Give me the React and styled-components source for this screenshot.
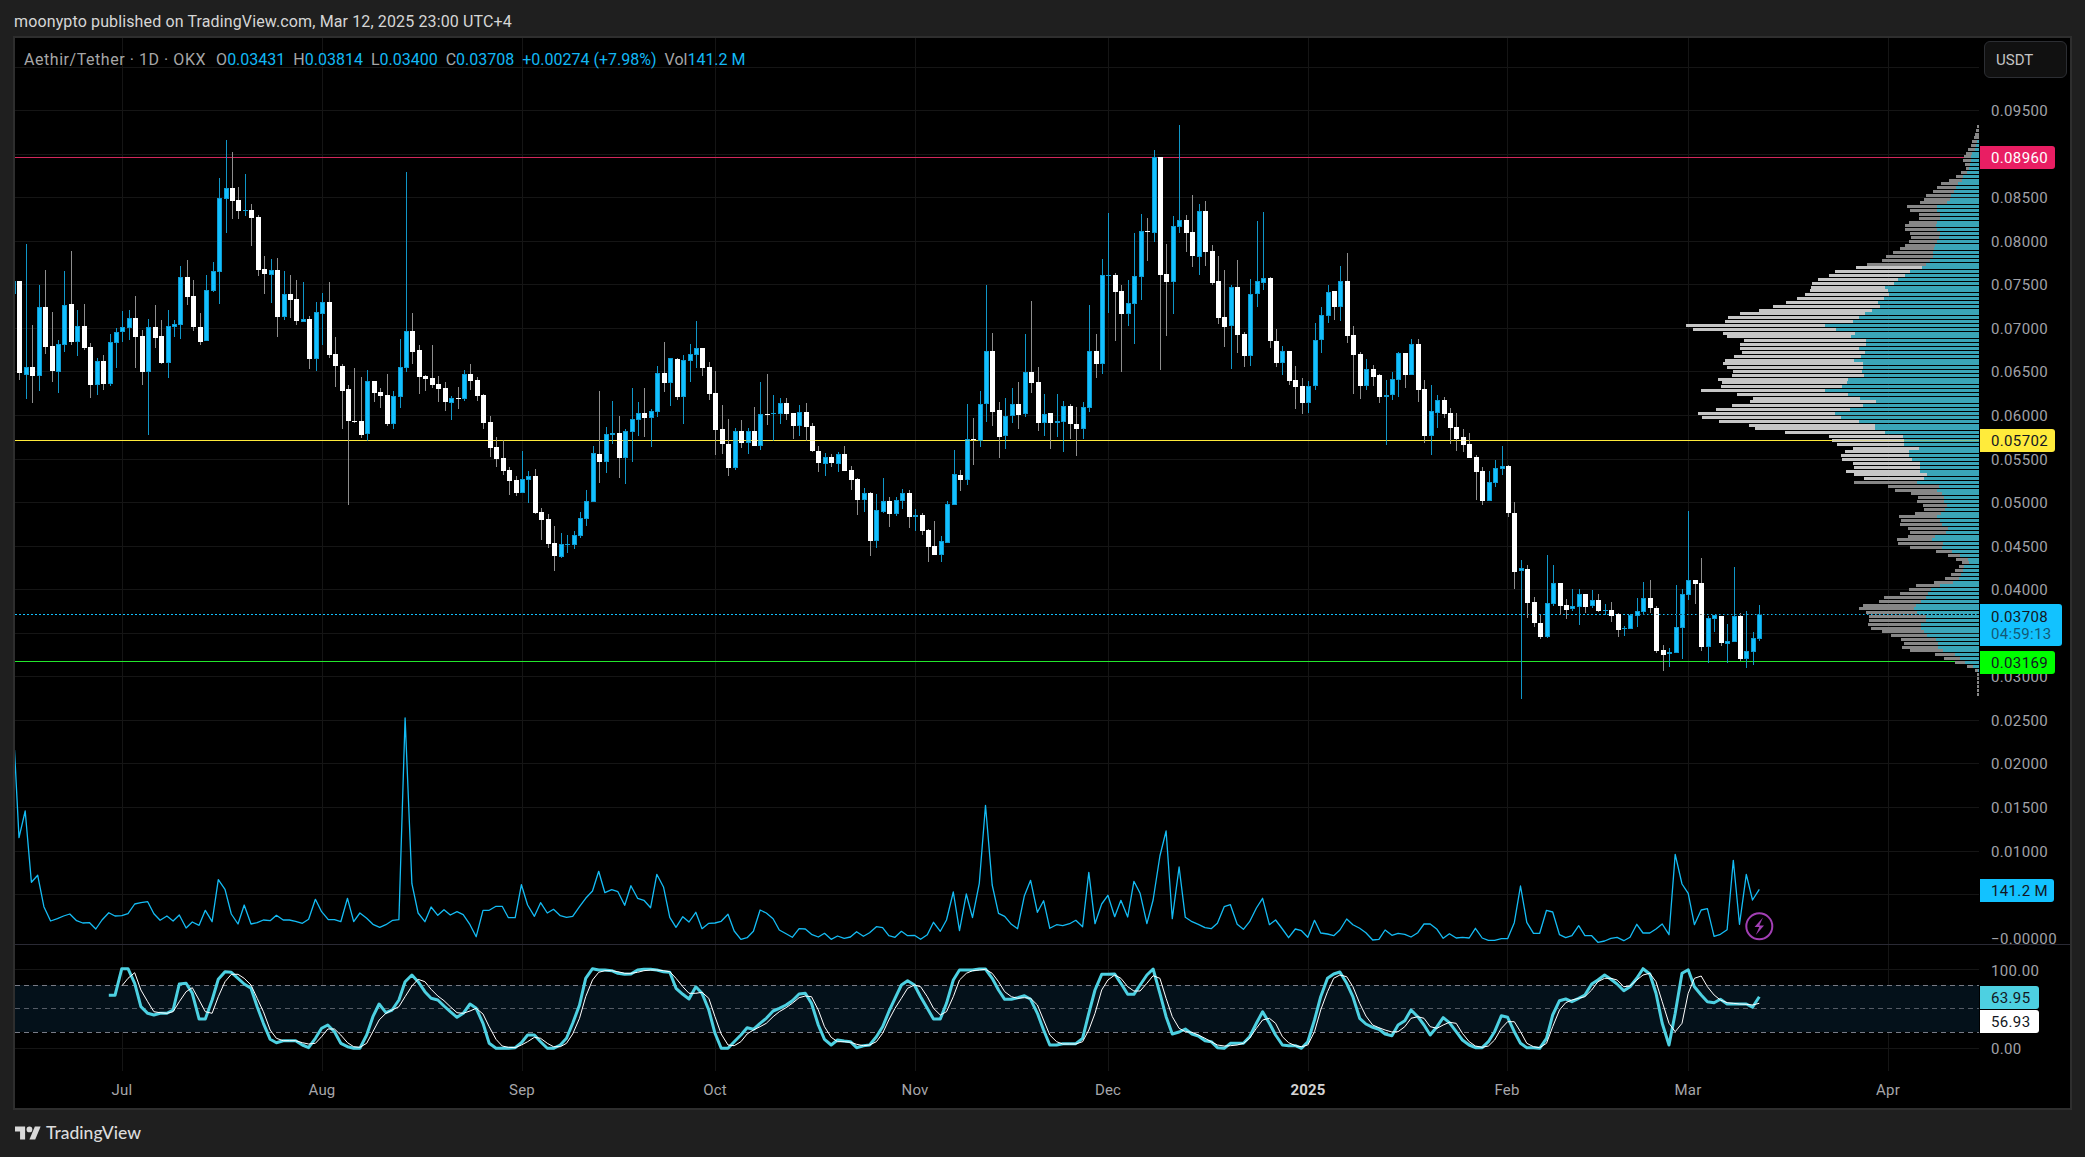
import React from 'react'
import styled, { createGlobalStyle } from 'styled-components'

// candles read off the chart: [bodyTop, bodyBottom, high, low, isBlue], y in crop pixels (3x)
const seg1 = [[470,470,453,492,1],[453,728,453,750],[711,735,342,806,1],[711,738,585,818],[531,738,465,783,1],[531,651,420,672],[648,723,546,756],[642,726,630,789,1],[525,645,423,666,1],[522,636,363,645],[588,636,540,678,1],[588,654,522,660],[651,765,639,804],[693,765,684,795,1],[693,762,675,780],[636,762,612,768,1],[606,639,594,714,1],[591,606,543,636,1],[564,594,540,630,1],[564,621,498,714],[618,726,600,765],[591,726,567,915,1],[591,624,525,654],[618,699,570,702],[588,699,540,744,1],[582,591,570,621,1],[441,585,408,627,1],[441,501,390,525],[498,591,450,603],[591,636,549,645],[480,633,435,633,1],[423,483,396,486,1],[204,426,144,522,1],[174,207,30,309,1],[174,213,66,267],[210,243,171,267],[240,243,132,258,1],[240,264,222,348],[261,420,255,438],[417,432,378,492],[420,435,387,519,1],[420,561,384,621],[492,561,423,570,1],[492,510,435,564],[507,573,450,585],[567,576,456,576,1],[567,687,558,717],[546,687,516,723,1],[516,552,489,645,1],[516,675,456,684],[672,708,621,771],[708,783,702,897],[777,873,765,1125],[873,876,714,879],[873,915,741,924],[753,912,720,933,1],[753,789,753,816],[786,798,774,834],[795,882,732,888],[798,882,783,897,1],[711,801,627,834,1],[603,714,126,726,1],[603,666,549,702],[660,741,645,792],[738,747,735,783],[744,765,645,774],[762,777,738,816],[774,816,756,843],[804,819,798,870,1],[804,807,771,837],[732,807,720,813,1],[732,753,702,780],[750,798,741,813],[795,879,792,897],[876,954,858,981],[951,987,921,1011],[984,1023,930,1035],[1020,1053,1011,1095],[1050,1089,1038,1098],[1047,1089,963,1089,1],[1038,1050,1023,1119,1]]
const seg2 = [[828,939,807,942],[936,960,924,1020],[957,1032,942,1044],[1029,1068,978,1113],[1032,1071,999,1074,1],[1032,1035,1005,1059,1],[1005,1035,993,1047,1],[954,1008,936,1014,1],[903,957,870,978,1],[759,906,738,906,1],[762,786,573,849],[702,786,681,819,1],[699,705,603,732,1],[699,774,648,834],[693,774,687,852,1],[657,696,564,786,1],[639,660,606,708,1],[639,654,564,711],[633,654,627,741,1],[519,636,498,651,1],[519,549,426,576],[474,549,474,618,1],[477,591,474,600],[480,591,465,672,1],[462,483,432,546,1],[444,465,363,504,1],[444,504,444,528],[501,582,486,600],[579,690,513,765],[687,732,615,762],[732,804,657,828],[693,804,684,810,1],[693,729,660,744],[693,729,684,762,1],[693,738,621,738],[642,738,546,750,1],[642,645,522,675],[639,642,585,723,1],[609,642,594,672,1],[609,642,594,660],[639,678,639,717],[636,678,615,708,1],[636,681,609,723],[678,753,669,756],[753,789,738,816],[771,792,759,828,1],[771,789,762,801],[762,792,756,816,1],[762,813,738,813],[810,840,798,870],[837,900,834,945],[879,900,864,936,1],[879,1023,876,1068],[930,1023,882,1044,1],[903,936,834,939,1],[903,942,891,981],[900,942,891,948,1],[879,903,867,927,1],[879,951,870,984],[945,951,927,993,1],[945,993,939,1005],[990,1041,987,1086],[1038,1065,963,1065],[1023,1065,1008,1086,1],[912,1029,903,1029,1],[822,915,750,915,1],[825,840,810,873],[717,840,612,855,1],[717,720,654,795],[612,723,573,741,1],[453,612,255,666,1],[453,636,399,678],[630,711,606,774],[648,708,594,747,1],[612,648,564,669,1],[612,645,546,687],[516,642,402,651,1],[516,549,303,579],[546,669,501,693]]
const seg3 = [[882,909,822,948,1],[879,909,879,987],[903,909,822,951,1],[858,906,843,996,1],[858,912,852,957],[912,927,861,1008],[861,927,846,957,1],[693,864,555,876,1],[693,732,642,774],[465,732,417,762,1],[465,468,279,579,1],[465,516,459,663],[513,582,495,756],[549,582,480,618,1],[468,552,339,672,1],[333,471,282,540,1],[333,336,294,423],[111,339,90,366,1],[111,465,111,750],[462,486,372,648],[318,486,288,582,1],[300,321,15,339,1],[300,339,285,396],[336,408,225,441],[273,411,252,465,1],[273,396,243,438],[393,489,375,495],[483,594,408,612],[591,621,450,681],[501,618,495,747,1],[501,645,420,699],[642,708,636,741],[522,708,477,738,1],[483,522,303,561,1],[474,489,276,510,1],[474,663,471,684],[663,729,627,741],[693,729,678,765,1],[693,783,693,795],[780,801,738,867],[798,849,774,882],[798,849,783,879,1],[660,798,609,810,1],[585,660,561,699,1],[516,588,495,609,1],[513,561,513,600],[483,561,438,603,1],[483,648,399,669],[645,705,618,822],[702,798,696,837],[747,798,717,810,1],[747,771,735,798],[765,831,762,849],[825,831,780,975,1],[777,825,756,840,1],[699,780,696,831,1],[699,765,699,804],[672,765,657,765,1],[672,810,657,846],[807,948,780,969],[873,948,795,1005,1],[840,879,825,924,1],[840,882,831,894],[879,924,864,972],[921,957,879,993],[951,975,927,996],[972,1014,939,1014],[1011,1056,1005,1140],[1053,1143,1041,1155],[1086,1143,1053,1143,1],[1044,1089,1020,1101,1],[1038,1047,978,1065,1],[1038,1179,1035,1191]]
const seg4 = [[459,636,427,687],[624,633,600,1017,1],[627,729,615,774],[726,789,711,801],[789,831,765,837],[729,831,585,834,1],[669,732,615,738,1],[669,738,669,765],[735,750,717,777],[738,747,687,753,1],[702,741,687,795,1],[702,741,702,759],[720,738,690,744,1],[720,753,702,756],[750,753,732,765,1],[750,768,726,786],[762,810,759,831],[803,806,798,828,1],[765,807,762,807,1],[753,768,714,801,1],[714,756,666,765,1],[714,744,660,759],[744,873,738,879],[870,885,855,933],[876,882,864,921,1],[801,879,675,879,1],[702,804,687,897,1],[660,705,453,720,1],[660,672,660,732],[669,861,594,873],[774,861,768,909,1],[765,777,765,816,1],[768,849,768,858],[843,852,792,909,1],[768,846,621,846,1],[768,897,759,903],[873,897,753,924,1],[834,876,816,915,1],[762,837,735,843,1]]

const fromCrop = (y0, rows) => rows.map(([t, b, h, l, blue]) => ({
  top: Math.round(y0 + t / 3),
  bottom: Math.round(y0 + b / 3),
  high: Math.round(y0 + h / 3),
  low: Math.round(y0 + l / 3),
  blue: !!blue,
}))
const candles = [...fromCrop(130, seg1), ...fromCrop(200, seg2), ...fromCrop(120, seg3), ...fromCrop(360, seg4)]
const BAR_STEP = (1759.3 - 19.3) / (candles.length - 2)
const barX = i => Math.max(15, Math.round(19.3 + (i - 1) * BAR_STEP))

// volume profile rows: [y, grey left, teal left], crop pixels
const profileTop = [[380,831],[392,829],[403,826],[413,822,836],[424,815,830],[436,813,827],[448,804,824],[459,797,815],[470,792,812],[482,789,812],[494,795,810],[505,798,808],[517,783,801],[528,768,790],[540,747,786],[551,723,774],[563,711,767],[575,699,762],[587,678,753],[598,672,750],[608,660,741],[620,621,711],[632,630,711],[644,657,720],[656,657,720],[666,627,711],[677,615,708],[689,615,711],[700,630,720],[712,633,717],[724,627,711],[735,615,705],[746,600,702],[757,579,699],[769,558,699],[781,546,690],[792,501,678],[803,468,666],[815,405,630],[827,387,615],[838,354,594],[850,336,582],[861,333,555],[872,330,564],[884,315,567],[895,291,552],[907,258,534],[919,219,540],[930,177,516],[941,120,495],[953,84,477],[965,75,459],[977,-42,375],[989,-20,408],[1000,69,465],[1010,81,453],[1022,132,498],[1034,120,498],[1045,120,477],[1057,126,495],[1068,102,483],[1080,75,462],[1091,69,489],[1103,81,489],[1115,99,486],[1127,96,492],[1137,54,444],[1148,66,441],[1160,63,426],[1172,3,375],[1184,111,444],[1195,159,480]]
const profileBottom = [[5,150,528],[16,96,489],[28,48,450],[40,-5,405],[52,6,423],[64,57,477],[75,147,525],[85,165,525],[97,255,555],[109,387,609],[121,396,612],[133,411,612],[145,459,657],[155,435,627],[166,423,627],[178,426,636],[190,459,660],[202,462,660],[213,438,660],[224,462,681],[236,492,672],[247,462,651],[259,564,717],[270,585,711],[281,633,726],[292,654,732],[304,651,732],[316,669,741],[328,672,735],[339,645,723],[350,597,711],[361,603,720],[373,600,726],[385,624,744],[397,630,738],[408,624,705],[419,591,696],[431,594,729],[442,630,726],[454,708,756],[466,744,780],[477,768,804],[488,786,807],[499,777,792],[511,765,789],[523,753,784],[535,735,778],[546,702,760],[557,648,720],[568,627,693],[580,600,684],[592,552,678],[604,537,663],[615,489,648],[626,477,642],[637,498,651],[649,507,678],[661,507,678],[673,504,663],[684,513,663],[694,546,672],[706,573,681],[718,603,708],[730,612,714],[742,606,714],[752,630,729],[763,705,765],[775,732,780],[787,765,795],[799,801,820],[811,825,835],[823,832],[835,832],[847,832],[859,832],[871,832],[883,832]]
const profileX = x => 1700 + x / 3
const profile = [
  ...profileTop.map(([y, g, t]) => [y / 3, g, t]),
  ...profileBottom.map(([y, g, t]) => [400 + y / 3, g, t]),
].map(([y, g, t]) => ({
  y: Math.round(y - 1.5),
  left: Math.max(15, profileX(g)),
  split: t === undefined ? 1979 : profileX(t),
  light: y > 264 && y < 482,
}))

// indicator lines, crop pixels (x at 1.7717x, y at 3x)
const volA = [[8,60],[16,323],[27,243],[38,457],[49,436],[60,530],[72,573],[84,566],[95,558],[106,552],[118,572],[129,579],[141,578],[152,597],[163,570],[175,548],[186,558],[198,557],[209,551],[221,522],[232,518],[244,515],[255,551],[266,571],[278,558],[289,573],[300,555],[312,594],[323,576],[335,586],[346,541],[358,575],[369,449],[381,478],[392,552],[404,582],[415,525],[427,582],[438,578],[449,570],[461,572],[472,556],[484,570],[495,570],[506,574],[518,580],[529,568],[541,508],[552,545],[564,569],[575,569],[586,575],[598,505],[609,575],[620,549],[632,565],[643,583],[655,592],[666,584],[678,571],[689,569],[700,-36],[712,461],[723,549],[735,575],[746,531],[758,556],[769,539],[780,555],[792,545],[803,554],[815,584],[826,620],[838,541],[849,541],[861,529],[872,529],[883,563],[895,563],[906,464],[917,525],[929,559],[940,518],[952,549],[963,538],[975,557],[986,562],[997,559],[1009,530],[1020,505],[1032,483],[1043,424],[1054,488],[1066,479],[1077,485],[1089,526],[1100,467],[1112,505],[1123,511],[1135,533],[1146,433],[1158,472],[1169,562],[1180,592],[1192,560],[1203,576],[1215,547],[1226,596],[1238,580],[1249,579],[1260,574],[1272,553],[1283,603],[1295,628],[1306,623],[1317,604],[1329,540],[1340,549],[1352,566],[1363,600],[1375,611],[1386,622],[1398,596],[1409,597],[1420,613],[1432,621],[1443,610],[1455,628],[1466,618],[1478,625],[1489,621],[1500,605],[1512,619],[1523,608],[1535,590],[1546,593],[1557,617],[1568,622]]
const volB = [[29,604],[40,617],[52,616],[63,628],[75,614],[86,577],[98,604],[109,570],[121,486],[132,602],[144,492],[155,563],[167,460],[178,226],[190,465],[201,550],[212,559],[224,583],[235,596],[247,497],[258,451],[270,547],[281,512],[292,595],[304,584],[315,587],[327,581],[338,571],[350,590],[361,427],[372,581],[384,522],[395,496],[407,560],[418,511],[430,561],[441,454],[452,490],[464,581],[475,510],[487,378],[498,303],[509,566],[521,411],[532,562],[544,575],[555,583],[567,593],[578,596],[589,580],[601,530],[612,524],[624,583],[635,598],[646,575],[658,534],[669,505],[681,584],[692,570],[704,597],[715,623],[727,597],[738,602],[749,622],[761,571],[772,609],[784,612],[795,617],[806,600],[818,567],[829,584],[841,595],[852,608],[864,630],[875,628],[886,600],[898,616],[909,610],[921,613],[932,621],[944,608],[955,582],[966,582],[978,598],[989,625],[1000,611],[1012,624],[1023,622],[1035,624],[1046,595],[1058,624],[1069,631],[1080,631],[1092,626],[1103,626],[1115,578],[1126,468],[1137,577],[1149,610],[1160,610],[1172,541],[1183,546],[1195,614],[1206,623],[1217,617],[1229,587],[1240,617],[1252,617],[1263,637],[1275,633],[1286,625],[1297,622],[1309,632],[1320,622],[1332,583],[1343,609],[1355,609],[1366,597],[1377,582],[1389,614],[1400,373],[1412,462],[1423,490],[1434,584],[1446,540],[1457,536],[1469,619],[1480,613],[1492,599],[1503,391],[1514,583],[1526,433],[1537,510],[1549,478]]
const kA = [[175,796],[186,796],[198,716],[209,716],[221,760],[232,830],[244,850],[255,855],[266,850],[278,850],[289,840],[300,762],[312,760],[323,790],[335,867],[346,867],[358,810],[369,748],[381,725],[392,727],[404,745],[415,762],[427,775],[438,830],[449,880],[461,928],[472,938],[484,932],[495,932],[506,932],[518,945],[529,953],[541,925],[552,895],[563,885],[575,905],[586,940],[598,950],[609,955],[620,955],[632,915],[643,860],[654,822],[666,848],[677,840],[689,810],[700,755],[712,735],[723,755],[735,785],[746,805],[758,810],[769,828],[780,845],[792,862],[803,850],[815,822],[826,835],[838,880],[849,940],[861,955],[872,955],[883,955],[895,953],[906,938],[917,915],[929,915],[940,935],[952,955],[963,955],[975,945],[986,925],[997,880],[1009,825],[1020,745],[1032,716],[1043,720],[1054,720],[1066,722],[1077,730],[1089,733],[1100,732],[1112,720],[1123,718],[1135,718],[1146,720],[1158,725],[1169,727],[1180,775],[1192,793],[1203,807],[1215,770],[1226,790],[1238,840],[1249,910],[1260,955],[1272,955],[1283,935],[1295,915],[1306,893],[1317,898],[1329,880],[1340,865],[1352,843],[1363,835],[1375,825],[1386,812],[1398,792],[1409,790],[1420,820],[1432,885],[1443,928],[1455,945],[1466,930],[1478,933],[1489,935],[1500,953],[1512,947],[1523,945],[1535,920],[1546,890],[1557,845],[1568,805]]
const kB = [[29,765],[40,752],[52,765],[63,800],[75,835],[86,867],[98,867],[109,820],[121,750],[132,720],[144,720],[155,720],[167,717],[178,717],[190,745],[201,780],[212,808],[224,808],[235,803],[247,797],[258,808],[270,850],[281,900],[292,945],[304,945],[315,941],[327,941],[338,941],[350,925],[361,850],[372,780],[384,733],[395,733],[407,732],[418,760],[430,793],[441,793],[452,765],[464,735],[475,717],[487,790],[498,860],[509,912],[521,906],[532,897],[544,912],[555,918],[567,932],[578,935],[589,953],[601,955],[612,940],[624,940],[635,940],[646,920],[658,880],[669,845],[681,880],[692,915],[704,945],[715,947],[727,947],[738,955],[749,935],[761,870],[772,800],[784,745],[795,732],[806,726],[818,760],[829,800],[841,865],[852,882],[864,892],[875,898],[886,912],[898,917],[909,885],[921,872],[932,840],[944,860],[955,885],[966,915],[978,890],[989,863],[1000,878],[1012,905],[1023,930],[1035,945],[1046,953],[1058,953],[1069,935],[1080,905],[1092,857],[1103,862],[1115,905],[1126,940],[1137,953],[1149,953],[1160,955],[1172,925],[1183,855],[1195,812],[1206,807],[1217,815],[1229,805],[1240,795],[1252,762],[1263,750],[1275,735],[1286,748],[1297,762],[1309,782],[1320,770],[1332,745],[1343,716],[1355,732],[1366,790],[1377,880],[1389,945],[1400,850],[1412,730],[1423,719],[1434,770],[1446,795],[1457,815],[1469,818],[1480,808],[1492,822],[1503,822],[1514,822],[1526,822],[1537,832],[1549,800]]
const dA = [[198,768],[209,745],[221,728],[232,780],[244,815],[255,845],[266,848],[278,850],[289,845],[300,815],[312,785],[323,773],[335,810],[346,845],[358,850],[369,800],[381,755],[392,733],[404,733],[415,745],[427,765],[438,805],[449,845],[461,900],[472,925],[484,932],[495,932],[506,932],[518,938],[529,942],[541,940],[552,920],[563,897],[575,897],[586,915],[598,938],[609,950],[620,952],[632,940],[643,905],[654,870],[666,850],[677,840],[689,830],[700,800],[712,768],[723,748],[735,755],[746,778],[758,798],[769,812],[780,830],[792,848],[803,850],[815,843],[826,835],[838,852],[849,890],[861,928],[872,948],[883,952],[895,953],[906,945],[917,935],[929,922],[940,925],[952,940],[963,950],[975,950],[986,940],[997,912],[1009,865],[1020,800],[1032,750],[1043,727],[1054,722],[1066,722],[1077,725],[1089,730],[1100,730],[1112,727],[1123,722],[1135,720],[1146,720],[1158,722],[1169,725],[1180,745],[1192,770],[1203,790],[1215,790],[1226,787],[1238,805],[1249,860],[1260,912],[1272,945],[1283,947],[1295,935],[1306,912],[1317,900],[1329,890],[1340,880],[1352,860],[1363,845],[1375,833],[1386,820],[1398,803],[1409,798],[1420,800],[1432,840],[1443,890],[1455,922],[1466,935],[1478,935],[1489,937],[1500,943],[1512,947],[1523,945],[1535,935],[1546,910],[1557,870],[1568,835]]
const dB = [[29,805],[40,775],[52,765],[63,770],[75,800],[86,835],[98,855],[109,845],[121,800],[132,750],[144,730],[155,722],[167,720],[178,718],[190,730],[201,755],[212,785],[224,800],[235,805],[247,803],[258,805],[270,825],[281,870],[292,915],[304,935],[315,942],[327,942],[338,942],[350,935],[361,900],[372,850],[384,780],[395,750],[407,735],[418,745],[430,770],[441,783],[452,783],[464,760],[475,737],[487,745],[498,805],[509,860],[521,895],[532,905],[544,907],[555,915],[567,925],[578,935],[589,945],[601,948],[612,947],[624,945],[635,940],[646,925],[658,895],[669,870],[681,865],[692,880],[704,920],[715,938],[727,947],[738,950],[749,945],[761,905],[772,840],[784,785],[795,745],[806,735],[818,740],[829,770],[841,820],[852,858],[864,885],[875,893],[886,900],[898,906],[909,905],[921,890],[932,865],[944,860],[955,865],[966,890],[978,895],[989,885],[1000,877],[1012,880],[1023,910],[1035,935],[1046,948],[1058,952],[1069,948],[1080,930],[1092,895],[1103,875],[1115,875],[1126,905],[1137,940],[1149,950],[1160,953],[1172,940],[1183,890],[1195,840],[1206,818],[1217,810],[1229,805],[1240,800],[1252,780],[1263,755],[1275,745],[1286,745],[1297,750],[1309,770],[1320,768],[1332,750],[1343,735],[1355,730],[1366,755],[1377,815],[1389,880],[1400,905],[1412,880],[1423,790],[1434,745],[1446,738],[1457,770],[1469,795],[1480,810],[1492,818],[1503,820],[1514,822],[1526,823],[1537,825],[1549,820]]

const ZOOM_X = 1.7717
const toPoints = (a, b) => [
  ...a.map(([x, y]) => [10 + x / ZOOM_X, 730 + y / 3]),
  ...b.map(([x, y]) => [885 + x / ZOOM_X, 730 + y / 3]),
].map(([x, y]) => `${x.toFixed(1)},${y.toFixed(1)}`).join(' ')

const priceY = p => 937.7 - p * 8712
const gridYs = Array.from({ length: 20 }, (_, i) => priceY(0.1 - i * 0.005)).map(Math.round)
const monthXs = [122, 322, 522, 715, 915, 1108, 1308, 1507, 1688, 1888]
const months = ['Jul', 'Aug', 'Sep', 'Oct', 'Nov', 'Dec', '2025', 'Feb', 'Mar', 'Apr']
const priceTicks = ['0.09500', '0.08500', '0.08000', '0.07500', '0.07000', '0.06500', '0.06000', '0.05500', '0.05000', '0.04500', '0.04000', '0.03000', '0.02500', '0.02000', '0.01500', '0.01000']

const AXIS_FONT = `Roboto, "Liberation Sans", sans-serif`

const GlobalStyle = createGlobalStyle`
  html, body {
    margin: 0;
    background: #1f1f1f;
    overflow: hidden;
  }
`
const Page = styled.div`
  width: 2085px;
  height: 1157px;
  display: flex;
  flex-direction: column;
  background: #1f1f1f;
  font-family: ${AXIS_FONT};
`
const Header = styled.header`
  height: 36px;
  flex: none;
  display: flex;
  align-items: center;
  padding: 7px 0 0 14px;
  box-sizing: border-box;
  color: #d6d6d6;
  font-size: 16px;
  letter-spacing: 0.13px;
`
const ChartFrame = styled.div`
  margin-left: 13px;
  width: 2059px;
  height: 1074px;
  flex: none;
  box-sizing: border-box;
  border: 2px solid #2e2e2e;
  background: #000;
  display: grid;
  grid-template-columns: 1964px 91px;
  grid-template-rows: 1033px 37px;
`
const Plot = styled.div`
  position: relative;
  overflow: hidden;
`
const ChartSvg = styled.svg`
  display: block;
  width: 1964px;
  height: 1033px;
`
const Legend = styled.div`
  position: absolute;
  left: 9px;
  top: 12px;
  display: flex;
  gap: 8px;
  font-size: 16px;
  white-space: nowrap;
  color: #a6a6a6;
`
const SymbolName = styled.span`
  letter-spacing: 0.55px;
  margin-right: 2px;
`
const LegendValue = styled.span`
  color: #12b8f5;
`
const Scale = styled.div`
  display: flex;
  flex-direction: column;
`
const MainScale = styled.div`
  position: relative;
  height: 907px;
  flex: none;
  overflow: hidden;
  box-sizing: border-box;
  border-bottom: 1px solid #2a2a35;
`
const StochScale = styled.div`
  position: relative;
  flex: 1;
`
const Tick = styled.span`
  position: absolute;
  left: 12px;
  transform: translateY(calc(-50% + 1px));
  font-size: 15px;
  line-height: 1;
  letter-spacing: 0.35px;
  color: #a0a2a8;
`
const UnitButton = styled.div`
  position: absolute;
  left: 5px;
  top: 3px;
  width: 83px;
  height: 37px;
  box-sizing: border-box;
  padding-left: 11px;
  display: flex;
  align-items: center;
  border: 1px solid #2c2e33;
  border-radius: 6px;
  background: #111;
  color: #c4c4c4;
  font-size: 15px;
`
const Badge = styled.div`
  position: absolute;
  left: 1px;
  width: ${p => p.$width || 75}px;
  box-sizing: border-box;
  padding: ${p => (p.$double ? '5px 0 4px 11px' : '1px 0 0 11px')};
  height: ${p => (p.$double ? 42 : 23)}px;
  display: flex;
  flex-direction: column;
  justify-content: center;
  gap: 2px;
  border-radius: 0 3px 3px 0;
  background: ${p => p.$bg};
  color: ${p => p.$fg || '#131722'};
  font-size: 15px;
  line-height: 1;
  letter-spacing: 0.35px;
`
const Countdown = styled.span`
  opacity: 0.62;
`
const TimeAxis = styled.div`
  position: relative;
  grid-column: 1 / 3;
`
const TimeLabel = styled.span`
  position: absolute;
  top: 12px;
  transform: translateX(-50%);
  font-size: 15px;
  line-height: 1;
  letter-spacing: 0.2px;
  color: ${p => (p.$strong ? '#d4d4d4' : '#a6a6aa')};
  font-weight: ${p => (p.$strong ? 700 : 400)};
`
const Footer = styled.footer`
  flex: 1;
  display: flex;
  align-items: center;
  gap: 5px;
  padding: 0 0 2px 15px;
  color: #dcdcdc;
`
const Wordmark = styled.span`
  font-family: Lato, Roboto, sans-serif;
  font-size: 17.5px;
  font-weight: 500;
`

const Candles = () => (
  <g shapeRendering="crispEdges">
    {candles.map((c, i) => {
      const x = barX(i)
      const h = Math.max(c.bottom - c.top, 1)
      return (
        <g key={i}>
          <rect x={x} y={c.high} width="1" height={c.low - c.high} fill={c.blue ? '#0f96c8' : '#8e8e8e'} />
          {i > 0 && <rect x={x - 2} y={c.top} width="5" height={h} fill={c.blue ? '#0e9bd2' : '#fff'} />}
          {c.blue && h > 2 && <rect x={x - 1} y={c.top + 1} width="3" height={h - 2} fill="#12c0ff" />}
        </g>
      )
    })}
  </g>
)

const VolumeProfile = () => (
  <g shapeRendering="crispEdges">
    {profile.map((r, i) => (
      <g key={i}>
        <rect x={r.left} y={r.y} width={1979 - r.left} height="3" fill={r.light ? '#c6c6c6' : '#868686'} />
        <rect x={r.split} y={r.y} width={Math.max(1979 - r.split, 0)} height="3" fill="#3aa5b8" />
      </g>
    ))}
  </g>
)

const ChartDrawing = () => (
  <ChartSvg viewBox="15 38 1964 1033">
    <g stroke="#151515" strokeWidth="1" shapeRendering="crispEdges">
      {gridYs.map(y => <line key={y} x1="15" x2="1979" y1={y + 0.5} y2={y + 0.5} />)}
      {monthXs.map(x => <line key={x} x1={x + 0.5} x2={x + 0.5} y1="38" y2="1071" />)}
      <line x1="15" x2="1979" y1="969.5" y2="969.5" />
      <line x1="15" x2="1979" y1="1048.5" y2="1048.5" />
    </g>

    <rect x="15" y="985" width="1964" height="47" fill="#04111a" />
    <g stroke="#787b86" strokeDasharray="5 4" shapeRendering="crispEdges">
      <line x1="15" x2="1979" y1="985.5" y2="985.5" />
      <line x1="15" x2="1979" y1="1008.5" y2="1008.5" strokeOpacity="0.7" />
      <line x1="15" x2="1979" y1="1032.5" y2="1032.5" />
    </g>
    <line x1="15" x2="1979" y1="944.5" y2="944.5" stroke="#2a2a35" />

    <g shapeRendering="crispEdges">
      <line x1="15" x2="1979" y1="157.5" y2="157.5" stroke="#d3285c" />
      <line x1="15" x2="1979" y1="440.5" y2="440.5" stroke="#ffeb3b" />
      <line x1="15" x2="1979" y1="661.5" y2="661.5" stroke="#22e62c" />
      <line x1="15" x2="1979" y1="614.5" y2="614.5" stroke="#12c2ff" strokeDasharray="2 2" />
    </g>

    <Candles />
    <VolumeProfile />
    <line x1="15" x2="1979" y1="440.5" y2="440.5" stroke="#ffeb3b" strokeOpacity="0.35" shapeRendering="crispEdges" />
    <line x1="1640" x2="1979" y1="614.5" y2="614.5" stroke="#0a0a0a" strokeDasharray="2 2" strokeOpacity="0.5" shapeRendering="crispEdges" />

    <polyline points={toPoints(volA, volB)} fill="none" stroke="#14bcf5" strokeWidth="1.3" strokeLinejoin="round" />
    <polyline points={toPoints(kA, kB)} fill="none" stroke="#4dd0e1" strokeWidth="3" strokeLinejoin="round" />
    <polyline points={toPoints(dA, dB)} fill="none" stroke="#fff" strokeWidth="1" strokeLinejoin="round" />

    <circle cx="1759.3" cy="926.3" r="13" fill="#000" stroke="#a23fb4" strokeWidth="2" />
    <path d="M1763 917.5 L1754.5 927 H1759.3 L1755.8 935 L1764 925.5 H1759.3 Z" fill="#a23fb4" />
  </ChartSvg>
)

const TvLogo = () => (
  <svg width="26" height="14" viewBox="0 3.5 36 19" fill="#d9d9d9">
    <path d="M14 22H7V11H0V4h14v18z" />
    <path d="M28 22h-8l7.5-18h8L28 22z" />
    <circle cx="20" cy="8" r="4" />
  </svg>
)

export default function App() {
  return (
    <Page>
      <GlobalStyle />
      <Header>moonypto published on TradingView.com, Mar 12, 2025 23:00 UTC+4</Header>
      <ChartFrame>
        <Plot>
          <ChartDrawing />
          <Legend>
            <SymbolName>Aethir/Tether · 1D · OKX</SymbolName>
            <span>O<LegendValue>0.03431</LegendValue></span>
            <span>H<LegendValue>0.03814</LegendValue></span>
            <span>L<LegendValue>0.03400</LegendValue></span>
            <span>C<LegendValue>0.03708</LegendValue></span>
            <LegendValue>+0.00274 (+7.98%)</LegendValue>
            <span>Vol<LegendValue>141.2 M</LegendValue></span>
          </Legend>
        </Plot>
        <Scale>
          <MainScale>
            <UnitButton>USDT</UnitButton>
            {priceTicks.map(t => (
              <Tick key={t} style={{ top: priceY(parseFloat(t)) - 38 }}>{t}</Tick>
            ))}
            <Tick style={{ top: 899.7 }}>−0.00000</Tick>
            <Badge $bg="#e91e63" $fg="#fff" style={{ top: 108 }}>0.08960</Badge>
            <Badge $bg="#ffeb3b" style={{ top: 391 }}>0.05702</Badge>
            <Badge $bg="#12c2ff" $double $width={82} style={{ top: 566 }}>
              <span>0.03708</span>
              <Countdown>04:59:13</Countdown>
            </Badge>
            <Badge $bg="#00ff00" style={{ top: 613 }}>0.03169</Badge>
            <Badge $bg="#12c2ff" $width={74} style={{ top: 841 }}>141.2 M</Badge>
          </MainScale>
          <StochScale>
            <Tick style={{ top: 24.7 }}>100.00</Tick>
            <Tick style={{ top: 103.3 }}>0.00</Tick>
            <Badge $bg="#4dd0e1" $width={59} style={{ top: 41 }}>63.95</Badge>
            <Badge $bg="#fff" $width={59} style={{ top: 65 }}>56.93</Badge>
          </StochScale>
        </Scale>
        <TimeAxis>
          {months.map((m, i) => (
            <TimeLabel key={m} $strong={m === '2025'} style={{ left: monthXs[i] - 15 }}>{m}</TimeLabel>
          ))}
        </TimeAxis>
      </ChartFrame>
      <Footer>
        <TvLogo />
        <Wordmark>TradingView</Wordmark>
      </Footer>
    </Page>
  )
}
